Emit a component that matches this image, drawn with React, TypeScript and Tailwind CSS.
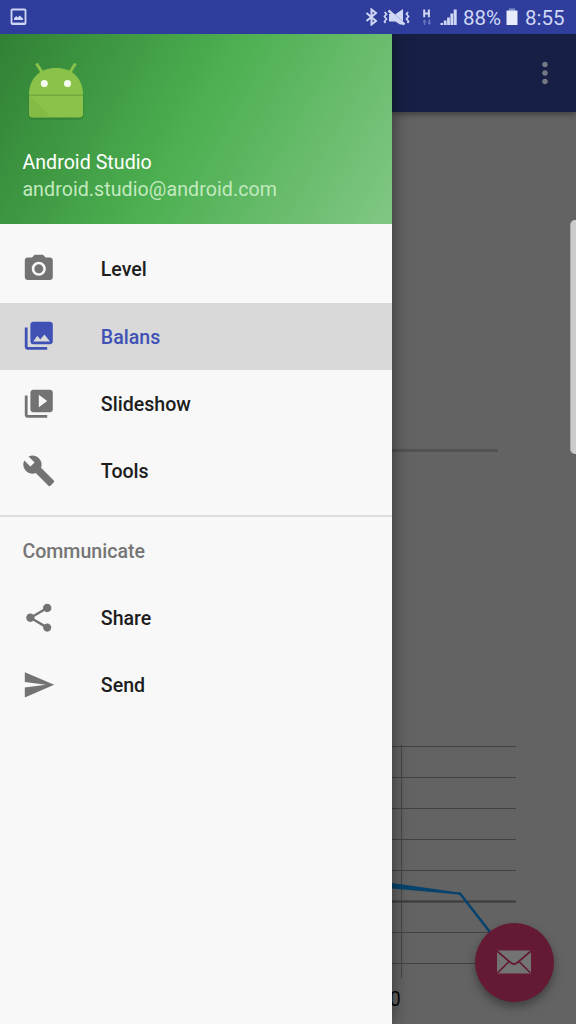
import {
  MdBuild,
  MdMoreVert,
  MdPhotoCamera,
  MdPhotoLibrary,
  MdSend,
  MdShare,
  MdVideoLibrary,
} from 'react-icons/md';
import type { IconType } from 'react-icons';

interface NavItemProps {
  icon: IconType;
  label: string;
  active?: boolean;
}

function NavItem({ icon: Icon, label, active }: NavItemProps) {
  return (
    <a
      className={`flex h-[67.2px] items-center pl-[22.4px] text-[19.6px] font-medium ${
        active ? 'bg-[#d9d9d9] text-[#3f51b5]' : 'text-[#1d1d1d]'
      }`}
    >
      <Icon size={33.6} className={active ? 'text-[#3f51b5]' : 'text-[#737373]'} />
      <span className="ml-[44.8px] pt-[2px]">{label}</span>
    </a>
  );
}

function StatusBar() {
  return (
    <header className="relative z-20 flex h-[34px] shrink-0 items-center justify-between bg-[#2f3e9d] pl-[10px] pr-[11px] text-[#d0d7f5]">
      <svg width="17" height="18" viewBox="0 0 17 18">
        <rect x="1.5" y="1.5" width="14" height="14.5" rx="1" fill="none" stroke="currentColor" strokeWidth="1.8" />
        <path d="M4 12V10.2L6.2 8l1.6 1.6L9.6 7.4 13 10.5V12z" fill="currentColor" />
        <path d="M2 14.6h13V16H2z" fill="currentColor" />
      </svg>
      <div className="flex items-center">
        {/* Bluetooth */}
        <svg width="13" height="18" viewBox="0 0 13 18" fill="none" stroke="currentColor" strokeWidth="2">
          <path d="M1.5 5L11 13 6.5 16.5V1.5L11 5 1.5 13" />
        </svg>
        {/* Muted, vibrating */}
        <svg width="27" height="18" viewBox="0 0 27 18" className="ml-[5px]">
          <path
            d="M1.5 4L3.5 6 1.5 8.5 3.5 11 1.5 13.5 2.5 15M25 4L23.5 6 25.5 8.5 23.5 11 25.5 13.5 24.5 15"
            fill="none"
            stroke="currentColor"
            strokeWidth="1.7"
          />
          <path d="M6 6H8.5L20.5 16.5H17L12.5 13.500H6z" fill="currentColor" />
          <path d="M12 6.500L20 1V13.500z" fill="currentColor" />
          <path d="M5.5 2.500L21.500 16.500" stroke="currentColor" strokeWidth="2.400" />
        </svg>
        {/* Mobile data */}
        <svg width="10" height="18" viewBox="0 0 10 18" className="ml-[12px]">
          <path d="M2.2 1.5V9.2M6.9 1.5V9.2M2.2 5.4H6.9" stroke="currentColor" strokeWidth="2" />
          <path d="M0.5 14L2.5 11.5 4.5 14H3.3V17H1.7V14zM5.3 14.5H6.5V11.5H8.1V14.5H9.3L7.3 17z" fill="#6976c1" />
        </svg>
        <svg width="18" height="18" viewBox="0 0 18 18" className="ml-[8px]" fill="currentColor">
          <path d="M0.5 15h2.5v2H0.5zM3.8 12.5h2.8v4.500H3.8zM7.1 9.500h2.800v7.500H7.1zM10.4 5.500H13.200v11.500h-2.800zM13.7 1.500h3V17H13.7z" />
        </svg>
        <span className="ml-[5px] w-[39px] whitespace-nowrap pt-[2px] text-[20.5px] leading-none">88%</span>
        <svg width="12" height="18" viewBox="0 0 12 18" className="ml-[4px]">
          <path d="M3 0.500h6v2H3z" fill="#8792cf" />
          <path d="M0.5 2.500h11V17H0.5z" fill="#e8ecfc" />
        </svg>
        <span className="ml-[7px] w-[40px] whitespace-nowrap pt-[2px] text-[20.5px] leading-none">8:55</span>
      </div>
    </header>
  );
}

function AndroidLogo() {
  return (
    <svg width="56" height="60" viewBox="0 0 56 60">
      <path d="M0.5 32h55v21a4 4 0 0 1-4 4.5h-47a4 4 0 0 1-4-4z" fill="#2b7a30" opacity=".6" />
      <path d="M8.5 1.5L16 13.5M47.5 1.5L40 13.5" stroke="#8bc34a" strokeWidth="3" />
      <path d="M1 33C1 16 12 6 28 6S55 16 55 33z" fill="#8bc34a" />
      <path d="M1 33h54v19a3.5 3.5 0 0 1-3.5 3.5h-47A3.5 3.5 0 0 1 1 52z" fill="#8bc34a" />
      <path d="M1 33L23 55.5H4.5A3.5 3.5 0 0 1 1 52z" fill="#7cb342" opacity=".5" />
      <path d="M1 33.2h54" stroke="#689f38" strokeWidth="1" />
      <circle cx="16.3" cy="21.5" r="3.5" fill="#f6fbf0" />
      <circle cx="39.5" cy="21.5" r="3.5" fill="#f6fbf0" />
    </svg>
  );
}

function Drawer() {
  return (
    <aside className="relative z-10 flex w-[392px] shrink-0 flex-col bg-[#f8f8f8] shadow-[0_0_16px_rgba(0,0,0,0.5)]">
      <div className="flex h-[190px] flex-col bg-[linear-gradient(119.7deg,#2e7d32,#4caf50,#81c784)] bg-[length:392px_224px] bg-bottom pl-[22.4px] pt-[28px]">
        <div className="ml-[5.6px]">
          <AndroidLogo />
        </div>
        <p className="mt-[27px] text-[19.6px] leading-[27px] tracking-[0.04px] text-white">Android Studio</p>
        <p className="text-[19.6px] leading-[27px] tracking-[0.07px] text-[#c2eabf]">android.studio@android.com</p>
      </div>
      <nav className="pt-[11.5px]">
        <NavItem icon={MdPhotoCamera} label="Level" />
        <NavItem icon={MdPhotoLibrary} label="Balans" active />
        <NavItem icon={MdVideoLibrary} label="Slideshow" />
        <NavItem icon={MdBuild} label="Tools" />
        <h2 className="mt-[11px] flex h-[69px] items-center border-t-2 border-[#dedede] pl-[22.4px] pt-[2px] text-[19.6px] font-medium text-[#757575]">
          Communicate
        </h2>
        <NavItem icon={MdShare} label="Share" />
        <NavItem icon={MdSend} label="Send" />
      </nav>
    </aside>
  );
}

function Chart() {
  const gridLines = [6.5, 37.5, 68.5, 99.5, 130.5, 192.5, 223.5];
  return (
    <svg width="184" height="284" viewBox="0 0 184 284" className="overflow-visible">
      {gridLines.map((y) => (
        <path key={y} d={`M0 ${y}H124`} stroke="#424242" />
      ))}
      <path d="M9.5 5V238" stroke="#464646" />
      <path d="M0 161.5H124" stroke="#3a3b38" strokeWidth="2.2" />
      <path d="M0 143L67 152.5V154.5L0 148.5z" fill="#07436c" />
      <path d="M66 153.5H68L101 196" fill="none" stroke="#07436c" strokeWidth="2.6" />
      <text x="-2.5" y="266" fontSize="20" fill="#080808">
        0
      </text>
    </svg>
  );
}

function Content() {
  return (
    <main className="flex flex-1 flex-col bg-[#636363]">
      <div className="flex h-[78px] shrink-0 items-center justify-end bg-[#172044] pr-[14px] shadow-[0_2px_6px_rgba(0,0,0,0.4)]">
        <MdMoreVert size={34} className="text-[#747985]" />
      </div>
      <div className="mt-[337px] h-[3px] w-[106px] bg-[#525252]" />
      <div className="mt-auto">
        <Chart />
      </div>
    </main>
  );
}

export default function App() {
  return (
    <div className="relative flex h-[1024px] w-[576px] flex-col overflow-hidden font-['Roboto',sans-serif]">
      <StatusBar />
      <div className="flex min-h-0 flex-1">
        <Drawer />
        <Content />
      </div>

      {/* Edge panel handle */}
      <div className="absolute right-0 top-[220px] h-[234px] w-[6px] rounded-l-[5px] border-l border-[#aaa] bg-[#cbcbcb]" />

      <button className="absolute left-[475px] top-[923px] flex size-[78.5px] items-center justify-center rounded-full bg-[#641a34] shadow-[0_5px_10px_rgba(0,0,0,0.35)]">
        <svg width="36" height="24" viewBox="0 0 36 24">
          <rect x="1" y="0.5" width="34" height="23" fill="#737373" />
          <path
            d="M1 1L14.5 12.5Q18 15.5 21.5 12.5L35 1M1.5 23L13 11.5M34.5 23L23 11.5"
            fill="none"
            stroke="#641a34"
            strokeWidth="1.7"
          />
        </svg>
      </button>
    </div>
  );
}
